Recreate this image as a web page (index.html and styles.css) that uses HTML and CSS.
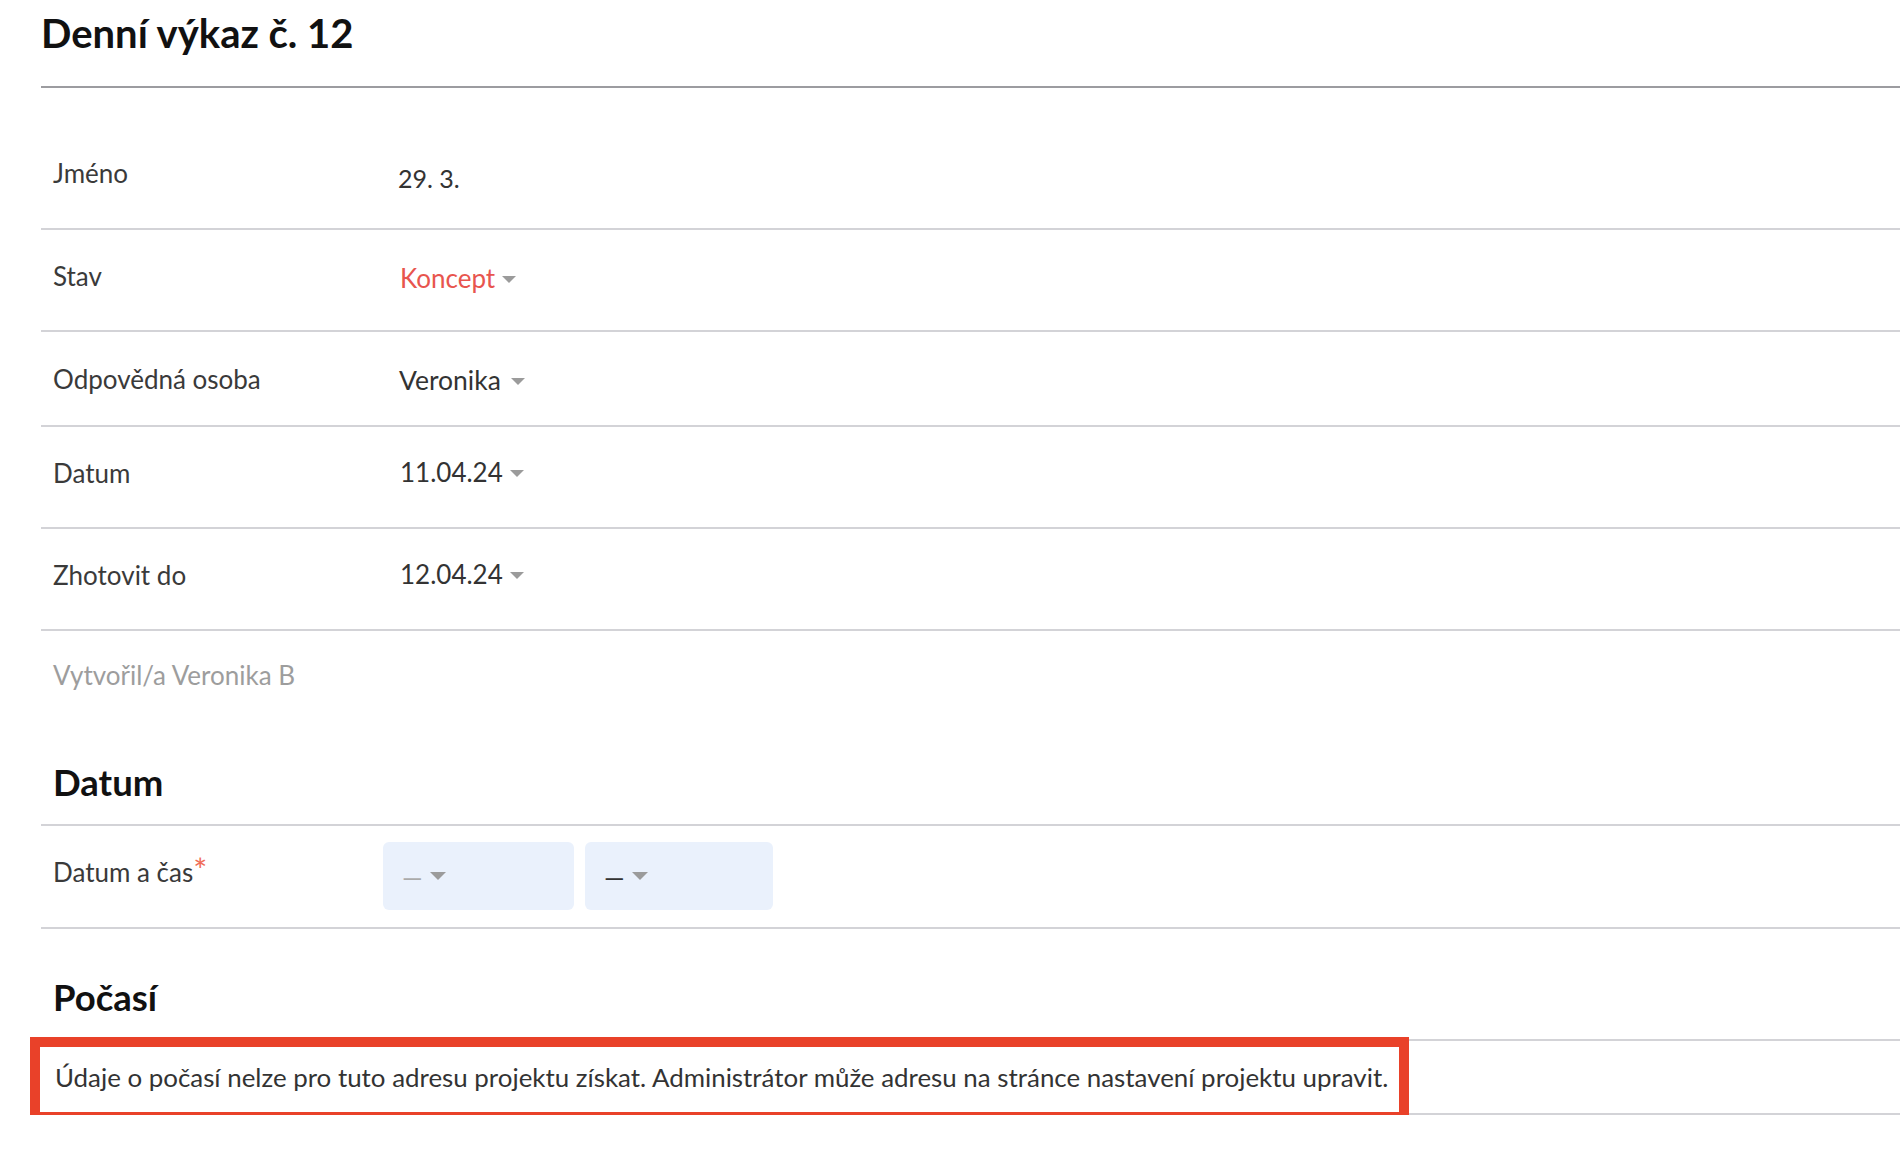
FILE: index.html
```html
<!DOCTYPE html>
<html lang="cs">
<head>
<meta charset="utf-8">
<title>Denní výkaz č. 12</title>
<link rel="stylesheet" href="styles.css">
</head>
<body>
<div class="page">
  <h1 class="title">Denní výkaz č. 12</h1>

  <div class="fields">
    <div class="row row-first">
      <div class="label">Jméno</div>
      <div class="value value-name">29. 3.</div>
    </div>
    <div class="row">
      <div class="label">Stav</div>
      <div class="value value-status"><span class="status">Koncept</span><span class="caret caret-tight"></span></div>
    </div>
    <div class="row row-short">
      <div class="label">Odpovědná osoba</div>
      <div class="value value-person">Veronika<span class="caret"></span></div>
    </div>
    <div class="row row-date">
      <div class="label">Datum</div>
      <div class="value value-date">11.04.24<span class="caret caret-tight"></span></div>
    </div>
    <div class="row row-date">
      <div class="label">Zhotovit do</div>
      <div class="value value-date">12.04.24<span class="caret caret-tight"></span></div>
    </div>
  </div>

  <div class="created">Vytvořil/a Veronika B</div>

  <section class="section">
    <h2 class="section-title section-title-first">Datum</h2>
    <div class="row row-datetime">
      <div class="label label-datetime">Datum a čas<sup class="required">*</sup></div>
      <div class="pickers">
        <div class="picker picker-date"><span class="dash dash-light">—</span><span class="caret caret-small"></span></div>
        <div class="picker picker-time"><span class="dash">—</span><span class="caret caret-small"></span></div>
      </div>
    </div>
  </section>

  <section class="section">
    <h2 class="section-title">Počasí</h2>
    <div class="row row-weather">
      <p class="message">Údaje o počasí nelze pro tuto adresu projektu získat. Administrátor může adresu na stránce nastavení projektu upravit.</p>
      <div class="highlight"></div>
    </div>
  </section>
</div>
</body>
</html>
```

FILE: styles.css
```css
* {
  box-sizing: border-box;
}

html, body {
  margin: 0;
  padding: 0;
  background: #ffffff;
}

body {
  font-family: Lato, "Open Sans", "Liberation Sans", sans-serif;
  color: #333333;
  overflow: hidden;
}

.page {
  padding-left: 41px;
  padding-top: 9px;
}

.title {
  margin: 0;
  font-size: 40px;
  line-height: 48px;
  font-weight: 700;
  color: #111111;
  padding-bottom: 29px;
  border-bottom: 2px solid #9c9ca0;
}

.row {
  display: grid;
  grid-template-columns: 345px 1fr;
  align-items: start;
  height: 102px;
  padding-top: 30px;
  padding-left: 12px;
  border-bottom: 2px solid #d3d3d7;
  font-size: 26px;
  line-height: 32px;
}

.row-first {
  height: 142px;
  padding-top: 69px;
}

.row-short {
  height: 95px;
  padding-top: 31px;
}

.label {
  color: #3a3a3a;
}

.value {
  color: #333333;
  display: flex;
  align-items: center;
}

.value-name {
  margin-top: 5px;
  font-size: 25px;
}

.value-status {
  margin-top: 2px;
}

.value-person {
  padding-left: 1px;
  margin-top: 1px;
  font-size: 26.5px;
}

.value-date {
  padding-left: 2px;
  margin-top: -1px;
}

.status {
  color: #e8554e;
  padding-left: 2px;
}

.caret {
  display: inline-block;
  width: 0;
  height: 0;
  border-left: 7px solid transparent;
  border-right: 7px solid transparent;
  border-top: 7px solid #9b9b9b;
  margin-left: 10px;
  margin-top: 3px;
}

.caret-tight {
  margin-left: 7px;
}

.created {
  margin-top: 28px;
  padding-left: 12px;
  font-size: 26px;
  line-height: 32px;
  color: #9d9d9d;
}

.section-title {
  margin: 47px 0 0;
  padding-left: 12px;
  padding-bottom: 20px;
  font-size: 36.5px;
  line-height: 43px;
  font-weight: 700;
  color: #111111;
  border-bottom: 2px solid #d3d3d7;
}

.section-title-first {
  margin-top: 70px;
}

.row-datetime {
  height: 103px;
  padding-top: 16px;
  grid-template-columns: 330px 1fr;
}

.label-datetime {
  padding-top: 14px;
}

.required {
  color: #f06c57;
  font-size: 33px;
  line-height: 0;
  vertical-align: 0;
  margin-left: 0;
}

.pickers {
  display: flex;
  gap: 11px;
}

.picker {
  height: 68px;
  background: #eaf1fc;
  border-radius: 6px;
  display: flex;
  align-items: center;
  padding-left: 19px;
  padding-top: 2px;
}

.picker-date {
  width: 191px;
}

.picker-time {
  width: 188px;
}

.dash {
  display: inline-block;
  color: #333333;
  font-size: 26px;
  line-height: 22px;
  margin-right: 7px;
}

.dash-light {
  color: #aaaaaa;
}

.caret-small {
  border-left-width: 8px;
  border-right-width: 8px;
  border-top-width: 8px;
  margin-left: 0;
  margin-top: -3px;
}

.row-weather {
  display: block;
  position: relative;
  height: 74px;
  padding-top: 20px;
  padding-left: 14px;
}

.message {
  margin: 0;
  font-size: 25.9px;
  line-height: 32px;
  color: #333333;
  white-space: nowrap;
}

.highlight {
  position: absolute;
  left: -11px;
  top: -4px;
  width: 1379px;
  height: 85px;
  border: 10px solid #e94129;
  pointer-events: none;
}
```
